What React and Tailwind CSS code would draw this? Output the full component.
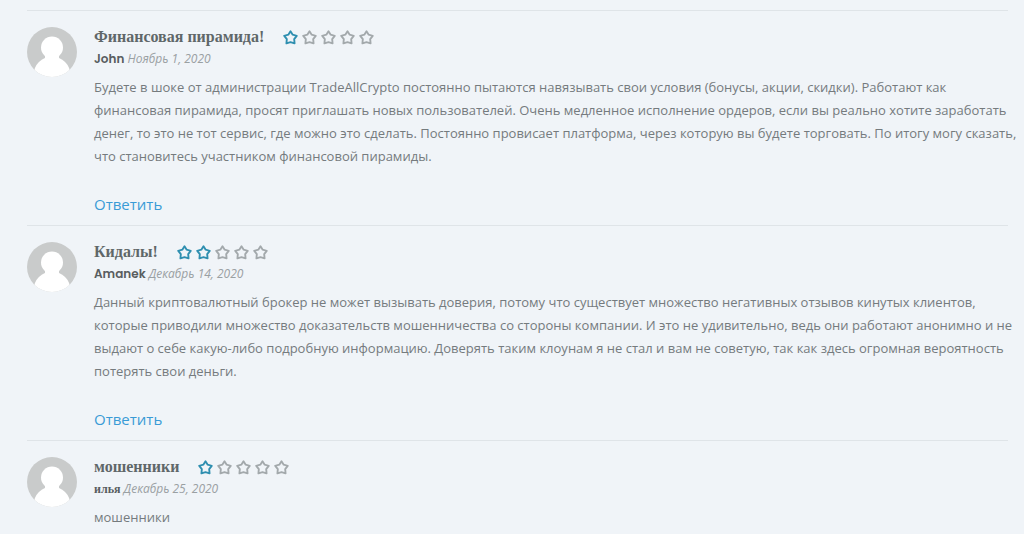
import React from 'react';

const reviews = [
  {
    id: 1,
    title: 'Финансовая пирамида!',
    author: 'John',
    date: 'Ноябрь 1, 2020',
    rating: 1,
    canReply: true,
    text: 'Будете в шоке от администрации TradeAllCrypto постоянно пытаются навязывать свои условия (бонусы, акции, скидки). Работают как финансовая пирамида, просят приглашать новых пользователей. Очень медленное исполнение ордеров, если вы реально хотите заработать денег, то это не тот сервис, где можно это сделать. Постоянно провисает платформа, через которую вы будете торговать. По итогу могу сказать, что становитесь участником финансовой пирамиды.',
  },
  {
    id: 2,
    title: 'Кидалы!',
    author: 'Amanek',
    date: 'Декабрь 14, 2020',
    rating: 2,
    canReply: true,
    text: 'Данный криптовалютный брокер не может вызывать доверия, потому что существует множество негативных отзывов кинутых клиентов, которые приводили множество доказательств мошенничества со стороны компании. И это не удивительно, ведь они работают анонимно и не выдают о себе какую-либо подробную информацию. Доверять таким клоунам я не стал и вам не советую, так как здесь огромная вероятность потерять свои деньги.',
  },
  {
    id: 3,
    title: 'мошенники',
    author: 'илья',
    date: 'Декабрь 25, 2020',
    rating: 1,
    canReply: false,
    text: 'мошенники',
  },
];

const Avatar = () => (
  <svg viewBox="0 0 50 50" className="size-[50px] shrink-0 rounded-full" aria-hidden="true">
    <rect width="50" height="50" fill="#c9cbcb" />
    <circle cx="25" cy="20.5" r="11" fill="#fff" />
    <path d="M18 27h14v4H18z" fill="#fff" />
    <ellipse cx="25" cy="48" rx="18.5" ry="18.5" fill="#fff" />
  </svg>
);

const Star = ({ active }) => (
  <svg
    viewBox="0 0 24 24"
    className={active ? 'size-[15px] text-[#2f8fb0]' : 'size-[15px] text-[#a3a9ac]'}
    fill="none"
    stroke="currentColor"
    strokeWidth="3"
    strokeLinejoin="round"
    aria-hidden="true"
  >
    <path d="M12 2l3.500 5.500 6.500 1.800-4.100 5.200.6 6.900L12 19.500l-6.500 1.900.6-6.900L2 9.300l6.500-1.800z" />
  </svg>
);

const Review = ({ review }) => (
  <li className="flex gap-[17px] border-t border-[#dfe4e8] pt-4 pb-[9px]">
    <Avatar />
    <article className="-mr-3 min-w-0 flex-1">
      <header>
        <div className="flex h-5 items-center gap-[19px]">
          <h3 className="font-['Liberation_Serif',serif] text-[16px] leading-5 font-bold text-[#5f6769]">
            {review.title}
          </h3>
          <div className="flex gap-1" role="img" aria-label={`${review.rating} / 5`}>
            {[1, 2, 3, 4, 5].map((n) => (
              <Star key={n} active={n <= review.rating} />
            ))}
          </div>
        </div>
        <p className="mt-0.5 text-[12px] leading-5 text-[#9aa0a3]">
          <b className="font-['Poppins','Liberation_Serif',serif] font-semibold text-[#585d5f]">
            {review.author}
          </b>{' '}
          <time className="italic">{review.date}</time>
        </p>
      </header>
      <p className="mt-[7px] text-[13px] leading-[23px] text-[#757b7e]">{review.text}</p>
      {review.canReply && (
        <a href="#reply" className="mt-6 block w-fit text-[15px] leading-6 text-[#3a9bd6]">
          Ответить
        </a>
      )}
    </article>
  </li>
);

const App = () => (
  <main className="min-h-screen bg-[#f0f4f8] pt-2.5 pr-4 pl-[27px] font-['Open_Sans',sans-serif]">
    <ul>
      {reviews.map((review) => (
        <Review key={review.id} review={review} />
      ))}
    </ul>
  </main>
);

export default App;
